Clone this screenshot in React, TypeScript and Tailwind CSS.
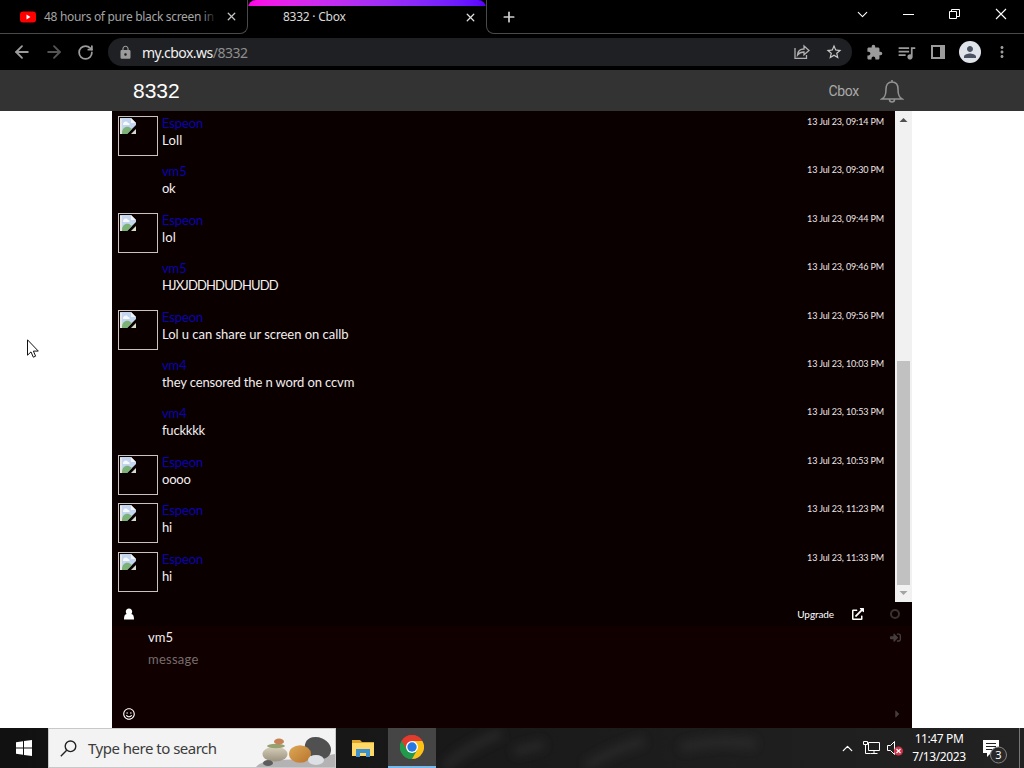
import React from 'react';
import { ArrowLeft, ArrowRight, ChevronDown, ChevronUp, Plus, RotateCw, X } from 'lucide-react';
import { MdExtension, MdLock, MdMoreVert, MdPerson, MdQueueMusic, MdStarBorder } from 'react-icons/md';
import { FaCaretRight, FaExternalLinkAlt, FaRegSmile, FaSignInAlt } from 'react-icons/fa';
import { clsx } from 'clsx';

interface Message {
  name: string;
  text: string;
  date: string;
  avatar?: boolean;
  spacing: string;
}

const MESSAGES: Message[] = [
  { name: 'Espeon', text: 'Loll', date: '13 Jul 23, 09:14 PM', avatar: true, spacing: 'tracking-[0.2px]' },
  { name: 'vm5', text: 'ok', date: '13 Jul 23, 09:30 PM', spacing: 'tracking-[-0.3px]' },
  { name: 'Espeon', text: 'lol', date: '13 Jul 23, 09:44 PM', avatar: true, spacing: 'tracking-[0.2px]' },
  { name: 'vm5', text: 'HJXJDDHDUDHUDD', date: '13 Jul 23, 09:46 PM', spacing: 'tracking-[-0.85px]' },
  { name: 'Espeon', text: 'Lol u can share ur screen on callb', date: '13 Jul 23, 09:56 PM', avatar: true, spacing: 'tracking-[-0.03px]' },
  { name: 'vm4', text: 'they censored the n word on ccvm', date: '13 Jul 23, 10:03 PM', spacing: 'tracking-[-0.12px]' },
  { name: 'vm4', text: 'fuckkkk', date: '13 Jul 23, 10:53 PM', spacing: 'tracking-[-0.2px]' },
  { name: 'Espeon', text: 'oooo', date: '13 Jul 23, 10:53 PM', avatar: true, spacing: 'tracking-[-0.2px]' },
  { name: 'Espeon', text: 'hi', date: '13 Jul 23, 11:23 PM', avatar: true, spacing: 'tracking-[-0.2px]' },
  { name: 'Espeon', text: 'hi', date: '13 Jul 23, 11:33 PM', avatar: true, spacing: 'tracking-[-0.2px]' },
];

const TabStrip: React.FC = () => (
  <div className="flex h-[34px] bg-black">
    <div className="flex w-[248px] items-center rounded-br-lg border-r border-b border-[#4a4a4a] pl-5">
      <svg className="h-4 w-4 shrink-0" viewBox="0 0 16 16">
        <rect x="0" y="2.5" width="16" height="11" rx="3" fill="#f00" />
        <path d="M6.5 5.5v5l4-2.5z" fill="#fff" />
      </svg>
      <div className="relative ml-2 w-[173px] text-[12px] tracking-[-0.32px] whitespace-nowrap text-[#a5a5a5]">
        48 hours of pure black screen in
        <div className="absolute inset-y-0 right-0 w-4 bg-gradient-to-r from-transparent to-black" />
      </div>
      <X className="ml-[8px] h-[13px] w-[13px] shrink-0 text-[#c4c4c4]" strokeWidth={2.4} />
    </div>

    {/* Active tab */}
    <div className="flex w-[238px] flex-col overflow-hidden rounded-t-lg">
      <div className="h-[6px] bg-gradient-to-r from-[#ff00e6] to-[#5a00ff]" />
      <div className="flex h-[22px] items-center justify-between pr-[9px] pl-[35px]">
        <span className="text-[12px] tracking-[-0.25px] text-[#d9d9d9]">8332 · Cbox</span>
        <X className="h-[13px] w-[13px] text-[#e0e0e0]" strokeWidth={2.4} />
      </div>
    </div>

    <div className="flex flex-1 items-center rounded-bl-lg border-b border-l border-[#4a4a4a] pl-[14px]">
      <Plus className="h-4 w-4 text-[#cfcfcf]" strokeWidth={2.6} />
      <div className="ml-auto flex items-center pr-[17px] pb-[5px]">
        <ChevronDown className="mr-[32px] h-[17px] w-[17px] text-white" strokeWidth={1.5} />
        <svg className="mr-[35px] h-3 w-[11px]" viewBox="0 0 11 12">
          <path d="M0 6.5h11" stroke="#fff" />
        </svg>
        <svg className="mr-[35px] h-3 w-[11px]" viewBox="0 0 11 12" fill="none" stroke="#fff">
          <path d="M.5 3.5h7v7h-7zM2.5 3.5v-2h8v7h-3" />
        </svg>
        <svg className="h-3 w-3" viewBox="0 0 12 12" stroke="#fff" strokeWidth="1.1">
          <path d="M1 1l10 10M11 1L1 11" />
        </svg>
      </div>
    </div>
  </div>
);

const Toolbar: React.FC = () => (
  <div className="flex h-[36px] items-center bg-black pl-3 text-[#9b9b9b]">
    <ArrowLeft className="h-5 w-5" strokeWidth={2.2} />
    <ArrowRight className="ml-3 h-5 w-5 text-[#555]" strokeWidth={2.2} />
    <RotateCw className="ml-[13px] h-[17px] w-[17px]" strokeWidth={2.5} />
    <div className="ml-[14px] flex h-7 w-[744px] items-center rounded-full bg-[#1f2023] pr-[9px] pl-[10px]">
      <MdLock className="h-[15px] w-[15px]" />
      <span className="ml-[9px] text-[14px] tracking-[-0.5px] whitespace-nowrap text-[#8e8e8e]">
        <span className="text-[#f0f0f0]">my.cbox.ws</span>/8332
      </span>
      <svg className="ml-auto h-4 w-4" viewBox="0 0 16 16" fill="none" stroke="#b0b0b0" strokeWidth="1.3">
        <path d="M1 4v10.300h11.500V11M3.500 11c.3-4 2.500-6 6.500-6V2l5 4.500-5 4.300V8C7 8 5 9 3.500 11z" />
      </svg>
      <MdStarBorder className="ml-[15px] h-[18px] w-[18px] text-[#c8c8c8]" />
    </div>
    <MdExtension className="ml-[14px] h-[17px] w-[17px]" />
    <MdQueueMusic className="ml-[13px] h-[21px] w-[21px]" />
    <svg className="ml-[14px] h-[14px] w-[14px]" viewBox="0 0 14 14">
      <path d="M1 1h12v12H1z" fill="none" stroke="currentColor" strokeWidth="2" />
      <path d="M9 1h4v12H9z" fill="currentColor" />
    </svg>
    <div className="ml-[14px] flex h-[22px] w-[22px] items-center justify-center rounded-full bg-[#dfe3ea]">
      <MdPerson className="h-[18px] w-[18px] text-[#4b5261]" />
    </div>
    <MdMoreVert className="ml-3 h-[18px] w-[18px]" />
  </div>
);

const BrokenImage: React.FC = () => (
  <div className="h-10 w-10 border border-[#c9c2c0] p-px">
    <svg className="h-4 w-4" viewBox="0 0 16 16">
      <path d="M0 0h11l5 5v2L7 16H0z" fill="#c4d5ef" />
      <path d="M0 1h2v15H0z" fill="#e6e6e6" />
      <path d="M11 0v5h5z" fill="#f4f4f4" />
      <path d="M3 6c1-3 4-3 5-1 2 0 2 2 1 2H3z" fill="#f6f9ff" />
      <path d="M2 15c0-4 3-7 7-6l3 2-5 5H2z" fill="#7db277" />
      <path d="M11 16l5-5v5z" fill="#d3dbcd" />
    </svg>
  </div>
);

const MessageRow: React.FC<{ message: Message }> = ({ message }) => (
  <div className="flex h-[48.4px] items-start pr-[11px] pl-[6px]">
    <div className="w-10 shrink-0">{message.avatar && <BrokenImage />}</div>
    <div className="ml-1 flex flex-col whitespace-nowrap">
      <span className="h-[15px] text-[13px] leading-[15px] tracking-[-0.1px] text-[#0b00b4]">{message.name}</span>
      <span className={clsx('text-[13px] leading-[18px] text-[#f3eeee]', message.spacing)}>{message.text}</span>
    </div>
    <span className="ml-auto text-[9px] leading-[12px] tracking-[-0.14px] whitespace-nowrap text-[#eee6e6]">{message.date}</span>
  </div>
);

const ScrollBar: React.FC = () => (
  <div className="flex w-[17px] flex-col items-center bg-[#f1f1f1]">
    <svg className="h-[17px] w-[17px]" viewBox="0 0 17 17">
      <path d="M4.500 11h8l-4-4z" fill="#505050" />
    </svg>
    <div className="mt-[233px] h-[224px] w-[13px] bg-[#c1c1c1]" />
    <svg className="h-[17px] w-[17px]" viewBox="0 0 17 17">
      <path d="M4.500 6h8l-4 4z" fill="#a3a3a3" />
    </svg>
  </div>
);

const ChatForm: React.FC = () => (
  <div className="flex h-[126px] flex-col bg-[#100000]">
    <div className="flex h-[24px] items-center bg-[#0a0000] pr-3 pl-[11px] text-white">
      <svg className="h-3 w-3" viewBox="0 0 12 12" fill="currentColor">
        <path d="M6 .5c2 0 3.200 1.300 3.200 3.200 0 1-.3 1.800-.9 2.400C10.300 6.500 11 8 11 11.500H1C1 8 1.700 6.500 3.700 6.100c-.6-.6-.9-1.400-.9-2.400C2.800 1.800 4 .5 6 .5z" />
      </svg>
      <span className="ml-auto text-[10px] tracking-[-0.1px]">Upgrade</span>
      <FaExternalLinkAlt className="ml-[18px] h-3 w-3" />
      <div className="ml-[26px] h-[10px] w-[10px] rounded-full border-2 border-[#3a3131]" />
    </div>
    <div className="flex h-[23px] items-center justify-between pr-[11px] pl-9">
      <span className="text-[13px] text-[#f3eeee]">vm5</span>
      <FaSignInAlt className="h-[11px] w-[11px] text-[#453c3c]" />
    </div>
    <div className="h-[53px] pl-9 text-[13px] leading-[20px] tracking-[0.25px] text-[#776d6d]">message</div>
    <div className="flex h-[23px] items-center justify-between px-[11px]">
      <FaRegSmile className="h-3 w-3 text-white" />
      <FaCaretRight className="h-[12px] w-[7px] text-[#453c3c]" />
    </div>
  </div>
);

const Stones: React.FC = () => (
  <svg className="ml-auto h-[38px] w-[80px]" viewBox="0 0 80 38">
    <defs>
      <linearGradient id="sand" x1="0" y1="0" x2="0" y2="1">
        <stop offset="0" stopColor="#d8d0bb" />
        <stop offset="1" stopColor="#9a917e" />
      </linearGradient>
      <linearGradient id="amber" x1="0" y1="0" x2="1" y2="1">
        <stop offset="0" stopColor="#dda957" />
        <stop offset="1" stopColor="#b8742d" />
      </linearGradient>
    </defs>
    <path d="M1 38c3-4 10-6 20-7l30-1 29-5v13z" fill="#b4b2b2" />
    <ellipse cx="63" cy="19" rx="13.500" ry="10.500" fill="#505050" transform="rotate(24 63 19)" />
    <ellipse cx="20" cy="25" rx="12.500" ry="7.500" fill="url(#sand)" />
    <ellipse cx="21" cy="17" rx="9" ry="2.200" fill="#96a070" />
    <ellipse cx="24" cy="12.500" rx="5" ry="3" fill="#c68254" />
    <ellipse cx="45" cy="25" rx="11" ry="8.800" fill="url(#amber)" />
    <ellipse cx="61" cy="31" rx="8" ry="5" fill="#dcdfe4" />
    <ellipse cx="13" cy="34" rx="5" ry="3" fill="#5d5d5d" />
  </svg>
);

const ChromeLogo: React.FC = () => (
  <svg className="h-6 w-6" viewBox="0 0 24 24">
    <path d="M12 12L1.600 6A12 12 0 0 1 22.400 6z" fill="#e33b2e" />
    <path d="M12 12L22.400 6A12 12 0 0 1 12 24z" fill="#fbc116" />
    <path d="M12 12v12A12 12 0 0 1 1.600 6z" fill="#229a4b" />
    <path d="M12 6h10.400l-5.200 9L12 24l5.200-9z" fill="#fbc116" />
    <path d="M1.600 6l5.200 9L12 12V6h10.400A12 12 0 0 0 1.600 6z" fill="#e33b2e" />
    <path d="M1.600 6l5.200 9 5.200 3 5.200-3L12 24A12 12 0 0 1 1.600 6z" fill="#229a4b" />
    <circle cx="12" cy="12" r="6" fill="#fff" />
    <circle cx="12" cy="12" r="4.700" fill="#2878e4" />
  </svg>
);

const Taskbar: React.FC = () => (
  <div className="flex h-10 bg-gradient-to-r from-[#111] via-[#1a1a1a] to-[#222] text-white">
    <div className="flex w-12 items-center justify-center">
      <svg className="h-4 w-4" viewBox="0 0 16 16" fill="#fff">
        <path d="M0 2.200l7-1v6.300H0zM8 1l8-1v7.500H8zM0 8.500h7v6.300l-7-1zM8 8.500h8V16l-8-1z" />
      </svg>
    </div>
    <div className="flex w-[288px] items-center border border-[#c8c8c8] bg-[#f3f3f3] pl-[11px] text-[#3c3c3c]">
      <svg className="h-[17px] w-[17px] shrink-0" viewBox="0 0 17 17" fill="none" stroke="#222" strokeWidth="1.400">
        <circle cx="10.500" cy="6.300" r="5.300" />
        <path d="M6.700 10.200L.8 16.200" />
      </svg>
      <span className="ml-[11px] text-[15px] tracking-[-0.5px] whitespace-nowrap">Type here to search</span>
      <Stones />
    </div>
    <div className="flex w-[52px] items-center justify-center pl-[2px]">
      <svg className="h-[19px] w-[22px]" viewBox="0 0 22 19">
        <path d="M0 1h8l2 2h12v5H0z" fill="#dda72d" />
        <path d="M0 4h22v13H0z" fill="#ffd968" />
        <path d="M4 10h14v8h-4v-4H8v4H4z" fill="#3d91cf" />
      </svg>
    </div>
    <div className="flex w-12 items-center justify-center border-b-2 border-[#76b9ed] bg-[#454545]">
      <ChromeLogo />
    </div>
    {/* Blurred marble wallpaper showing through the bar */}
    <svg className="h-10 w-[403px]" viewBox="0 0 403 40" preserveAspectRatio="none">
      <defs>
        <filter id="soft" x="-20%" y="-50%" width="140%" height="200%">
          <feGaussianBlur stdDeviation="5" />
        </filter>
      </defs>
      <path d="M8 40Q28 20 65 5M78 24l30-8M150 38q30-18 58-25M245 20q30-9 75-4" fill="none" stroke="#3a3a3a" strokeWidth="10" opacity=".4" filter="url(#soft)" />
    </svg>
    <ChevronUp className="h-[17px] w-[17px] shrink-0 self-center" strokeWidth={1.8} />
    <svg className="ml-[7px] h-4 w-[17px] shrink-0 self-center" viewBox="0 0 17 16" fill="none" stroke="#fff">
      <path d="M5.500 2.500h11v8h-11zM11 10.500v3M7.500 13.500h7M.5 1.500h4v3h-4zM2.500 4.500v9h5" />
    </svg>
    <svg className="ml-[7px] h-4 w-4 shrink-0 self-center" viewBox="0 0 16 16">
      <path d="M.5 5.500h3l4-4v13l-4-4h-3z" fill="none" stroke="#fff" />
      <circle cx="11.500" cy="11" r="4.500" fill="#cf3448" />
      <path d="M9.500 9l4 4M13.500 9l-4 4" stroke="#fff" strokeWidth="1.200" />
    </svg>
    <div className="flex w-[72px] shrink-0 flex-col items-center justify-center text-[12px] leading-[18px] whitespace-nowrap">
      <span className="tracking-[-0.4px]">11:47 PM</span>
      <span className="tracking-[-0.4px]">7/13/2023</span>
    </div>
    <svg className="mt-3 ml-2 h-6 w-6 shrink-0" viewBox="0 0 24 24">
      <path d="M0 0h16v13H8l-4 4v-4H0z" fill="#fff" />
      <path d="M3 3.500h10M3 6.500h10M3 9.500h6" stroke="#222" />
      <circle cx="15.500" cy="15" r="8" fill="#292929" stroke="#858585" />
      <text x="15.500" y="19" textAnchor="middle" fontSize="11" fill="#fff">3</text>
    </svg>
    <div className="ml-auto w-[5px] border-l border-[#777]" />
  </div>
);

export default function App() {
  return (
    <div className="flex h-screen w-[1024px] flex-col overflow-hidden bg-white font-['Noto_Sans',sans-serif]">
      <TabStrip />
      <Toolbar />
      <header className="flex h-[41px] items-center bg-[#333] pr-[120px] pl-[133px] font-['Roboto',sans-serif]">
        <h1 className="font-['Liberation_Sans',sans-serif] text-[21px] text-white">8332</h1>
        <span className="ml-auto pt-px text-[14px] tracking-[-0.3px] text-[#aaa]">Cbox</span>
        <svg className="ml-[21px] h-6 w-6" viewBox="0 0 24 24" fill="none" stroke="#929292" strokeWidth="1.600">
          <path d="M12 1v2M2 20c3-2 4-4 4-10 0-4 2-7 6-7s6 3 6 7c0 6 1 8 4 10zM9.500 20.500a2.500 2.500 0 0 0 5 0" />
        </svg>
      </header>
      <main className="mx-auto w-[800px] font-['Lato',sans-serif]">
        <div className="flex h-[491px] bg-[#0a0000]">
          <div className="flex-1 pt-[5px]">
            {MESSAGES.map((message, i) => (
              <MessageRow key={i} message={message} />
            ))}
          </div>
          <ScrollBar />
        </div>
        <ChatForm />
      </main>
      <Taskbar />
      {/* Mouse pointer */}
      <svg className="absolute top-[339px] left-[27px] h-[19px] w-3" viewBox="0 0 12 19">
        <path d="M.5.8v15.400l3.500-3.300 2.300 5.300 2.300-1-2.200-5.100h4.900z" fill="#fff" stroke="#111" />
      </svg>
    </div>
  );
}
